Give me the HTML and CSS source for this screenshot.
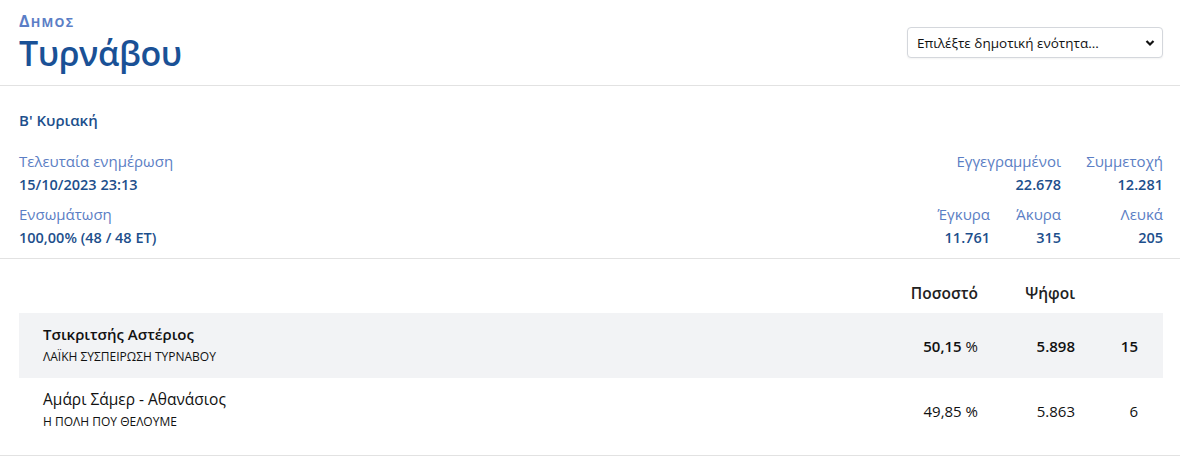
FILE: index.html
```html
<!DOCTYPE html>
<html lang="el">
<head>
  <meta charset="UTF-8" />
  <meta name="viewport" content="width=device-width, initial-scale=1.0"/>
  <title>Δήμος Τυρνάβου - Αποτελέσματα</title>
  <link rel="stylesheet" href="styles.css">
</head>
<body>

  <header class="page-head">
    <div class="place">
      <div class="kicker">Δημος</div>
      <h1>Τυρνάβου</h1>
    </div>
    <div class="unit-select">
      <select>
        <option>Επιλέξτε δημοτική ενότητα...</option>
        <option>Τυρνάβου</option>
        <option>Αμπελώνα</option>
      </select>
      <svg class="chevron" width="10" height="8" viewBox="0 0 10 8"><path d="M1.5 2 L5 5.5 L8.5 2" fill="none" stroke="#111" stroke-width="2.2"/></svg>
    </div>
  </header>

  <section class="summary">
    <h2>Β' Κυριακή</h2>
    <div class="stats">
      <div class="meta">
        <div class="stat">
          <span class="label">Τελευταία ενημέρωση</span>
          <span class="value">15/10/2023 23:13</span>
        </div>
        <div class="stat">
          <span class="label">Ενσωμάτωση</span>
          <span class="value">100,00% (48 / 48 ΕΤ)</span>
        </div>
      </div>
      <div class="counts">
        <div class="stat"></div>
        <div class="stat">
          <span class="label">Εγγεγραμμένοι</span>
          <span class="value">22.678</span>
        </div>
        <div class="stat">
          <span class="label">Συμμετοχή</span>
          <span class="value">12.281</span>
        </div>
        <div class="stat">
          <span class="label">Έγκυρα</span>
          <span class="value">11.761</span>
        </div>
        <div class="stat">
          <span class="label">Άκυρα</span>
          <span class="value">315</span>
        </div>
        <div class="stat">
          <span class="label">Λευκά</span>
          <span class="value">205</span>
        </div>
      </div>
    </div>
  </section>

  <section class="results">
    <table>
      <thead>
        <tr>
          <th></th>
          <th class="num">Ποσοστό</th>
          <th class="num votes">Ψήφοι</th>
          <th class="num seats"></th>
        </tr>
      </thead>
      <tbody>
        <tr class="winner">
          <td class="candidate">
            <div class="name">Τσικριτσής Αστέριος</div>
            <div class="party">ΛΑΪΚΗ ΣΥΣΠΕΙΡΩΣΗ ΤΥΡΝΑΒΟΥ</div>
          </td>
          <td class="num">50,15 <span class="pct">%</span></td>
          <td class="num votes">5.898</td>
          <td class="num seats">15</td>
        </tr>
        <tr>
          <td class="candidate">
            <div class="name">Αμάρι Σάμερ - Αθανάσιος</div>
            <div class="party">Η ΠΟΛΗ ΠΟΥ ΘΕΛΟΥΜΕ</div>
          </td>
          <td class="num">49,85 <span class="pct">%</span></td>
          <td class="num votes">5.863</td>
          <td class="num seats">6</td>
        </tr>
      </tbody>
    </table>
  </section>

</body>
</html>
```

FILE: styles.css
```css
body {
  font-family: 'Open Sans', 'Noto Sans', sans-serif;
  margin: 0;
  padding: 0;
  background: #fff;
  color: #111;
}

.page-head {
  display: flex;
  justify-content: space-between;
  align-items: center;
  height: 86px;
  box-sizing: border-box;
  padding: 0 17px 0 19px;
  border-bottom: 1px solid #e2e2e2;
}

.kicker {
  height: 20px;
  font-size: 12.5px;
  line-height: 20px;
  font-weight: 700;
  text-transform: uppercase;
  letter-spacing: 1.2px;
  color: #5b7ec6;
}

.kicker::first-letter {
  font-size: 16px;
}

.page-head h1 {
  margin: 0;
  font-size: 34px;
  line-height: 44px;
  font-weight: 600;
  color: #1a5196;
  letter-spacing: -0.4px;
}

.unit-select {
  position: relative;
}

.unit-select select {
  appearance: none;
  width: 256px;
  height: 31px;
  padding: 0 30px 0 9px;
  border: 1px solid #d4d7dc;
  border-radius: 4px;
  background: #fff;
  font-family: inherit;
  font-size: 13.5px;
  color: #111;
  box-shadow: 0 1px 2px rgba(0, 0, 0, 0.05);
}

.unit-select .chevron {
  position: absolute;
  right: 8px;
  top: 12px;
  pointer-events: none;
}

.summary {
  padding: 22px 17px 8px 19px;
  border-bottom: 1px solid #e2e2e2;
}

.summary h2 {
  margin: 0 0 17px;
  font-size: 15px;
  line-height: 24px;
  font-weight: 600;
  color: #1d4f8c;
}

.stats {
  display: flex;
  justify-content: space-between;
}

.meta {
  display: flex;
  flex-direction: column;
  gap: 5px;
}

.counts {
  display: grid;
  grid-template-columns: 80px 71px 102px;
  row-gap: 5px;
  text-align: right;
}

.stat {
  display: flex;
  flex-direction: column;
}

.counts .stat {
  align-items: flex-end;
}

.label {
  font-size: 15px;
  line-height: 24px;
  color: #5b7ec4;
  white-space: nowrap;
}

.value {
  font-size: 14.5px;
  line-height: 24px;
  font-weight: 600;
  color: #1d4f8c;
}

.results {
  padding: 0 17px 12px 19px;
  border-bottom: 1px solid #e2e2e2;
}

table {
  width: 100%;
  border-collapse: collapse;
}

th {
  padding: 22px 0 8px;
  font-size: 15.5px;
  line-height: 24px;
  font-weight: 600;
  color: #222;
}

td {
  padding: 11px 0;
  font-size: 15px;
  vertical-align: middle;
}

.num {
  text-align: right;
}

.votes {
  width: 97px;
}

.seats {
  width: 63px;
  padding-right: 25px;
}

.candidate {
  padding-left: 24px;
}

.name {
  font-size: 15.5px;
  line-height: 21px;
}

.party {
  margin-top: 2px;
  font-size: 12px;
  line-height: 20px;
}

.pct {
  font-weight: 400;
}

.winner td {
  background: #f2f3f5;
}

.winner .name {
  font-size: 15px;
}

.winner .name,
.winner .num {
  font-weight: 600;
}
```
